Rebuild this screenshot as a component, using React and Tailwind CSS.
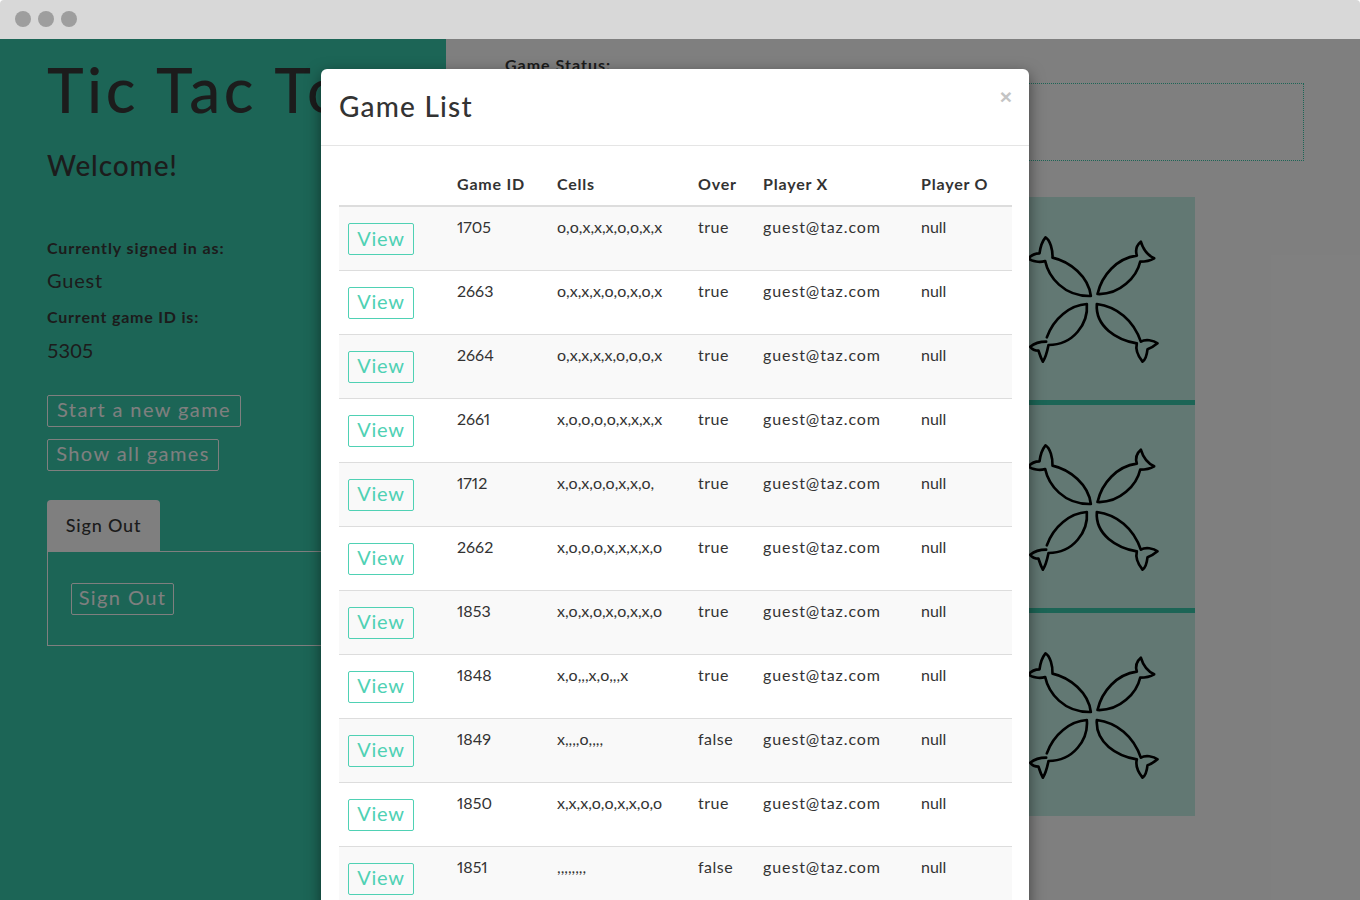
const rows = [
  ["1705", "o,o,x,x,x,o,o,x,x", "true"],
  ["2663", "o,x,x,x,o,o,x,o,x", "true"],
  ["2664", "o,x,x,x,x,o,o,o,x", "true"],
  ["2661", "x,o,o,o,o,x,x,x,x", "true"],
  ["1712", "x,o,x,o,o,x,x,o,", "true"],
  ["2662", "x,o,o,o,x,x,x,x,o", "true"],
  ["1853", "x,o,x,o,x,o,x,x,o", "true"],
  ["1848", "x,o,,,x,o,,,x", "true"],
  ["1849", "x,,,,o,,,,", "false"],
  ["1850", "x,x,x,o,o,x,x,o,o", "true"],
  ["1851", ",,,,,,,,", "false"],
];

function Fish() {
  return (
    <svg viewBox="0 120 440 420" className="mt-[2px] h-[140px] w-[147px]" fill="none" stroke="#000" strokeWidth="8" strokeLinejoin="round" strokeLinecap="round">
      <path d="M212 318C205 260 150 215 97 203C98 180 90 150 76 142C65 155 60 175 58 190C45 190 32 197 25 205C35 215 60 218 75 213C85 260 130 320 212 318Z" />
      <path d="M232 312C245 255 290 205 350 197C345 180 350 165 362 155C368 175 380 195 402 205C390 212 375 215 360 215C350 260 300 315 232 312Z" />
      <path d="M80 442C100 385 150 345 200 342C205 400 160 465 85 465C82 480 78 500 68 515C60 500 58 490 55 482C45 482 35 477 30 470C40 462 60 455 78 455" />
      <path d="M230 342C290 350 340 390 362 455C375 447 400 450 412 460C400 470 390 475 382 478C380 495 375 510 367 515C355 500 345 480 350 460C290 450 225 410 230 342Z" />
    </svg>
  );
}

function OutlineButton({ children, className }) {
  return (
    <button className={"block h-[32px] whitespace-nowrap rounded-[2px] border border-white pb-[5px] text-[20px] leading-none tracking-[1.4px] text-white " + className}>
      {children}
    </button>
  );
}

export default function App() {
  return (
    <div className="relative h-[900px] w-[1360px] overflow-hidden bg-white font-['Lato',sans-serif] text-[#383838]">
      <div className="flex h-[39px] items-center gap-[7px] rounded-t-[4px] bg-[#d8d8d8] pb-[1px] pl-[15px]">
        <span className="h-4 w-4 rounded-full bg-[#9e9e9e]" />
        <span className="h-4 w-4 rounded-full bg-[#9e9e9e]" />
        <span className="h-4 w-4 rounded-full bg-[#9e9e9e]" />
      </div>

      <div className="relative flex h-[861px]">
        <aside className="w-[446px] shrink-0 bg-[#38caac] pl-[47px]">
          <h1 className="mt-[14px] whitespace-nowrap text-[62px] font-medium leading-[72px] tracking-[3.5px]">Tic Tac Toe</h1>
          <h2 className="mt-[23px] text-[28px] font-medium leading-[34px] tracking-[0.9px]">Welcome!</h2>
          <p className="mt-[55px] text-[16px] font-bold leading-[22px] tracking-[0.9px]">Currently signed in as:</p>
          <p className="mt-[9px] text-[20px] leading-[24px] tracking-[0.8px]">Guest</p>
          <p className="mt-[14px] text-[16px] font-bold leading-[22px] tracking-[0.8px]">Current game ID is:</p>
          <p className="mt-[10px] text-[20px] leading-[24px]">5305</p>
          <OutlineButton className="mt-[33px] w-[194px]">Start a new game</OutlineButton>
          <OutlineButton className="mt-[12px] w-[172px]">Show all games</OutlineButton>
          <div className="mt-[29px] w-[373px]">
            <div className="flex h-[51px] w-[113px] items-center justify-center rounded-t-[4px] bg-white text-[18px] font-medium tracking-[0.8px]">Sign Out</div>
            <div className="h-[95px] border border-white pl-[23px] pt-[31px]">
              <OutlineButton className="w-[103px]">Sign Out</OutlineButton>
            </div>
          </div>
        </aside>

        <main className="flex-1 bg-white">
          <p className="ml-[59px] mt-[15px] text-[16px] font-bold leading-[22px] tracking-[1px]">Game Status:</p>
          <div className="ml-[59px] mt-[7px] h-[78px] w-[799px] border border-dotted border-[#38caac]" />
          <div className="ml-[130px] mt-[36px] grid w-[619px] grid-cols-3 gap-[5px] bg-[#38caac]">
            {Array.from({ length: 9 }).map((_, i) => (
              <div key={i} className="flex h-[203px] items-center justify-center bg-[#c4f0e6]">
                <Fish />
              </div>
            ))}
          </div>
        </main>

        <div className="absolute inset-0 bg-black/50" />
      </div>

      <div className="absolute left-[321px] top-[69px] w-[708px] rounded-t-[6px] bg-white shadow-[0_5px_15px_rgba(0,0,0,0.5)]">
        <div className="relative h-[77px] border-b border-[#e5e5e5] pl-[18px] pt-[18px]">
          <h3 className="text-[28px] font-medium leading-[38px] tracking-[1.2px] text-[#333]">Game List</h3>
          <span className="absolute right-[17px] top-[15px] font-['Liberation_Sans',sans-serif] text-[21px] font-bold leading-[26px] text-[#c4c4c4]">×</span>
        </div>
        <div className="px-[18px] pt-[16px]">
          <table className="w-[673px] table-fixed border-collapse text-[16px] text-[#333]">
            <colgroup>
              <col className="w-[110px]" />
              <col className="w-[100px]" />
              <col className="w-[141px]" />
              <col className="w-[65px]" />
              <col className="w-[158px]" />
              <col className="w-[99px]" />
            </colgroup>
            <thead>
              <tr className="h-[44px] border-b-2 border-[#ddd] text-left tracking-[0.8px]">
                <th />
                <th className="px-2 font-bold">Game ID</th>
                <th className="px-2 font-bold">Cells</th>
                <th className="px-2 font-bold">Over</th>
                <th className="px-2 font-bold">Player X</th>
                <th className="px-2 font-bold">Player O</th>
              </tr>
            </thead>
            <tbody>
              {rows.map((r, i) => (
                <tr key={r[0]} className={"h-[64px] border-b border-[#ddd] align-top leading-[22px] " + (i % 2 === 0 ? "bg-[#f9f9f9]" : "bg-white")}>
                  <td className="pl-[9px] pt-[16px]">
                    <button className="block h-[32px] w-[66px] rounded-[2px] border-[1.5px] border-[#4fd1b4] pb-[3px] text-[20px] leading-none tracking-[0.8px] text-[#4fd1b4]">View</button>
                  </td>
                  <td className="px-2 pt-[9px] proportional-nums">{r[0]}</td>
                  <td className="px-2 pt-[9px]">{r[1]}</td>
                  <td className="px-2 pt-[9px] tracking-[0.5px]">{r[2]}</td>
                  <td className="px-2 pt-[9px] tracking-[0.9px]">guest@taz.com</td>
                  <td className="px-2 pt-[9px]">null</td>
                </tr>
              ))}
            </tbody>
          </table>
        </div>
      </div>
    </div>
  );
}
